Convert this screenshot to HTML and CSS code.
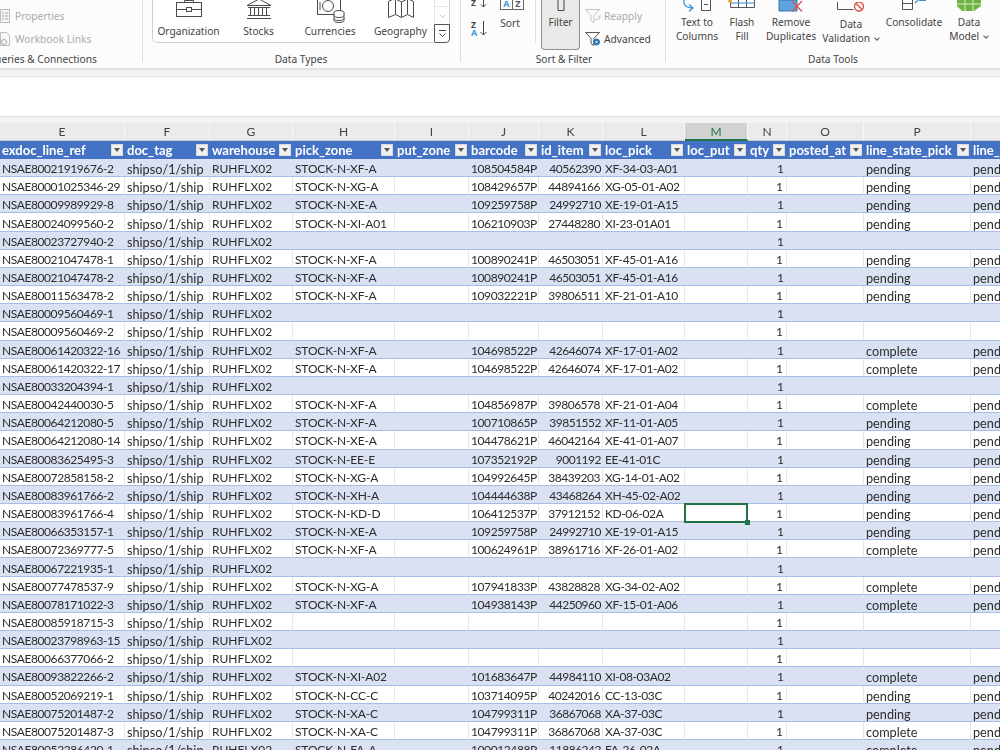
FILE: index.html
```html
<!DOCTYPE html>
<html lang="en">
<head>
<meta charset="utf-8">
<title>Excel data ribbon and sheet</title>
<link rel="stylesheet" href="styles.css">
</head>
<body>
<div class="ribbon">
  <section class="group g-queries">
    <div class="group-body list">
      <div class="list-item muted"><svg class="li-icon" width="10" height="14" viewBox="0 0 10 14"><rect x="0.5" y="0.5" width="9" height="13" fill="#f4f4f4" stroke="#bdbdbd"/><path d="M2 4h2M2 7h2M2 10h2M5 4h3M5 7h3M5 10h3" stroke="#a9a9a9"/></svg><span>Properties</span></div>
      <div class="list-item muted"><svg class="li-icon" width="10" height="14" viewBox="0 0 10 14"><path d="M0.5 0.5h6l3 3v10h-9z" fill="#f8f8f8" stroke="#bdbdbd"/><circle cx="4" cy="10" r="2.5" fill="none" stroke="#a9a9a9"/></svg><span>Workbook Links</span></div>
    </div>
    <div class="group-label label-queries">Queries &amp; Connections</div>
  </section>

  <section class="group g-types">
    <div class="group-body">
      <div class="gallery">
        <div class="g-item">
          <svg width="30" height="21" viewBox="0 0 30 21" fill="none" stroke="#4a4a4a"><path d="M10.500 2V0.500h9V2"/><rect x="2.500" y="2.500" width="25" height="14"/><path d="M2.500 9.500h10M17.500 9.500h10"/><rect x="12.500" y="7.500" width="5" height="4"/></svg>
          <span>Organization</span>
        </div>
        <div class="g-item">
          <svg width="30" height="21" viewBox="0 0 30 21" fill="none" stroke="#4a4a4a"><path d="M3 5.500 15 -1 27 5.500H3z"/><path d="M6.500 7v9M10.500 7v9M14.500 7v9M18.500 7v9M22.500 7v9"/><path d="M4 7.500h22M4 15.500h22M3 18.500h24"/></svg>
          <span>Stocks</span>
        </div>
        <div class="g-item">
          <svg width="30" height="23" viewBox="0 0 30 23" fill="none" stroke="#4a4a4a"><rect x="2.500" y="-2.500" width="23" height="17"/><circle cx="13" cy="6" r="5.500"/><path d="M5 2v8"/><ellipse cx="24" cy="12.500" rx="5" ry="2" fill="#fff"/><path d="M19 12.500v8c0 1.300 2.200 2 5 2s5-.7 5-2v-8M19 15.500c0 1.300 2.200 2 5 2s5-.7 5-2M19 18.500c0 1.300 2.200 2 5 2s5-.7 5-2" fill="#fff"/></svg>
          <span>Currencies</span>
        </div>
        <div class="g-item">
          <svg width="30" height="21" viewBox="0 0 30 21" fill="none" stroke="#4a4a4a"><path d="M7.500 -1 2.500 1.500v16l7-3 6 3 6-3 6 3V1.500l-6-3"/><path d="M9.500 -1v15.500M15.500 2v15.500M21.500 -1v15.500M9.500 -1l6 3 6-3"/></svg>
          <span>Geography</span>
        </div>
        <div class="scroller">
          <div class="sc-btn sc-up"></div>
          <div class="sc-btn sc-mid"><svg width="9" height="6" viewBox="0 0 9 6" fill="none" stroke="#c4c4c4"><path d="M1.500 1.500 4.500 4.500 7.500 1.500"/></svg></div>
          <div class="sc-btn sc-more"><svg width="9" height="8" viewBox="0 0 9 8" fill="none" stroke="#444"><path d="M1 .5h7M1.500 3.500 4.500 6.500 7.500 3.500"/></svg></div>
        </div>
      </div>
    </div>
    <div class="group-label label-types">Data Types</div>
  </section>

  <section class="group g-sort">
    <div class="group-body sort-body">
      <div class="sort-small">
        <svg width="18" height="10" viewBox="0 0 18 10" class="az"><text x="0" y="6" class="az-dark">Z</text><path d="M12.500 0v7M10 4.500l2.500 2.500L15 4.500" fill="none" stroke="#444"/></svg>
        <svg width="18" height="18" viewBox="0 0 18 18" class="az"><text x="0" y="8" class="az-dark">Z</text><text x="0" y="16" class="az-blue">A</text><path d="M12.500 1v14M9.500 12l3 3 3-3" fill="none" stroke="#444"/></svg>
      </div>
      <div class="sort-big">
        <div class="sort-box"><span class="sb-a">A</span><span class="sb-z">Z</span></div>
        <span>Sort</span>
      </div>
      <div class="v-sep"></div>
      <div class="filter-btn">
        <svg width="8" height="11" viewBox="0 0 8 11" fill="none" stroke="#444"><path d="M1 0v10.500h6V0"/></svg>
        <span>Filter</span>
      </div>
      <div class="list sort-list">
        <div class="list-item muted"><svg width="16" height="16" viewBox="0 0 16 16" fill="none" stroke="#c2c2c2"><path d="M.5 1.500h14L9 7.500v7l-3-2v-5z"/><path d="M10 11a3 3 0 0 0 5-2M15 6.500V9h-2.500"/></svg><span>Reapply</span></div>
        <div class="list-item"><svg width="16" height="16" viewBox="0 0 16 16" fill="none" stroke="#555"><path d="M.5 1.500h14L9 7.500v7l-3-2v-5z"/><circle cx="11.500" cy="11" r="3" fill="#2e75b6" stroke="#2e75b6"/><circle cx="11.500" cy="11" r="1" fill="#fff" stroke="none"/></svg><span>Advanced</span></div>
      </div>
    </div>
    <div class="group-label label-sort">Sort &amp; Filter</div>
  </section>

  <section class="group g-tools">
    <div class="group-body tools">
      <div class="tool t-text">
        <svg width="32" height="15" viewBox="0 0 32 15" fill="none"><path d="M4 -2c-3 5 0 10 8 10" stroke="#3b8ed0" stroke-width="1.200"/><path d="M8 4.500l4 3.500-4 3.500" stroke="#3b8ed0" stroke-width="1.200"/><rect x="20.500" y="-2.500" width="9" height="13" stroke="#555"/><path d="M23 4.500h4" stroke="#555"/></svg>
        <span>Text to</span><span>Columns</span>
      </div>
      <div class="tool t-flash">
        <svg width="28" height="15" viewBox="0 0 28 15" fill="none"><path d="M2.500 -1v8.500h24V-1M10.500 -1v8.500M18.500 -1v8.500" stroke="#555"/><path d="M2.500 3h24" stroke="#3b8ed0"/><circle cx="2" cy="1" r="1.800" fill="#ed9a2d"/></svg>
        <span>Flash</span><span>Fill</span>
      </div>
      <div class="tool t-remove">
        <svg width="26" height="15" viewBox="0 0 26 15" fill="none"><path d="M1 0h18v11H1z" fill="#5ea3dd" stroke="#3b78b0"/><path d="M14 1 24 11.500M24 1 14 11.500" stroke="#e0524a" stroke-width="1.300"/></svg>
        <span>Remove</span><span>Duplicates</span>
      </div>
      <div class="tool t-valid">
        <svg width="28" height="15" viewBox="0 0 28 15" fill="none"><path d="M.5 -1v8.500h16M.5 -1h16" stroke="#555"/><circle cx="22" cy="4.500" r="4.500" stroke="#e0524a" stroke-width="1.400"/><path d="M19 1.500l6 6" stroke="#e0524a" stroke-width="1.400"/></svg>
        <span>Data</span><span>Validation <i class="chev"></i></span>
      </div>
      <div class="tool t-cons">
        <svg width="30" height="15" viewBox="0 0 30 15" fill="none"><path d="M3.500 -1v10.500h10V-1M3.500 3.500h10" stroke="#555"/><path d="M16 3l3-3M20 .5h7" stroke="#3b8ed0" stroke-width="1.200"/></svg>
        <span>Consolidate</span>
      </div>
      <div class="tool t-model">
        <svg width="28" height="15" viewBox="0 0 28 15"><path d="M2 -1h24v7l-7 5H7l-5-5z" fill="#6eb33f"/><path d="M10 -1v12M18 -1v12M2 4h24" stroke="#d8eec8" fill="none"/></svg>
        <span>Data</span><span>Model <i class="chev"></i></span>
      </div>
    </div>
    <div class="group-label label-tools">Data Tools</div>
  </section>
</div>

<div class="ribbon-shade"></div>
<div class="formula-gap"></div>

<div class="sheet">
  <div class="col-strip"></div>
  <table class="grid">
    <colgroup>
      <col class="c-e"><col class="c-f"><col class="c-g"><col class="c-h"><col class="c-i"><col class="c-j"><col class="c-k"><col class="c-l"><col class="c-m"><col class="c-n"><col class="c-o"><col class="c-p"><col class="c-q">
    </colgroup>
    <thead>
      <tr class="letters"><th>E</th><th>F</th><th>G</th><th>H</th><th>I</th><th>J</th><th>K</th><th>L</th><th class="active">M</th><th>N</th><th>O</th><th>P</th><th></th></tr>
      <tr class="heads">
        <th><div class="hd"><span>exdoc_line_ref</span><i class="fb"></i></div></th>
        <th><div class="hd"><span>doc_tag</span><i class="fb"></i></div></th>
        <th><div class="hd"><span>warehouse</span><i class="fb"></i></div></th>
        <th><div class="hd"><span>pick_zone</span><i class="fb"></i></div></th>
        <th><div class="hd"><span>put_zone</span><i class="fb"></i></div></th>
        <th><div class="hd"><span>barcode</span><i class="fb"></i></div></th>
        <th><div class="hd"><span>id_item</span><i class="fb"></i></div></th>
        <th><div class="hd"><span>loc_pick</span><i class="fb"></i></div></th>
        <th><div class="hd"><span>loc_put</span><i class="fb"></i></div></th>
        <th><div class="hd"><span>qty</span><i class="fb"></i></div></th>
        <th><div class="hd"><span>posted_at</span><i class="fb"></i></div></th>
        <th><div class="hd"><span>line_state_pick</span><i class="fb"></i></div></th>
        <th><div class="hd"><span>line_state_put</span><i class="fb"></i></div></th>
      </tr>
    </thead>
    <tbody>
      <tr><td>NSAE80021919676-2</td><td>shipso/1/ship</td><td>RUHFLX02</td><td>STOCK-N-XF-A</td><td></td><td>108504584P</td><td class="r">40562390</td><td>XF-34-03-A01</td><td></td><td class="r">1</td><td></td><td>pending</td><td>pending</td></tr>
      <tr><td>NSAE80001025346-29</td><td>shipso/1/ship</td><td>RUHFLX02</td><td>STOCK-N-XG-A</td><td></td><td>108429657P</td><td class="r">44894166</td><td>XG-05-01-A02</td><td></td><td class="r">1</td><td></td><td>pending</td><td>pending</td></tr>
      <tr><td>NSAE80009989929-8</td><td>shipso/1/ship</td><td>RUHFLX02</td><td>STOCK-N-XE-A</td><td></td><td>109259758P</td><td class="r">24992710</td><td>XE-19-01-A15</td><td></td><td class="r">1</td><td></td><td>pending</td><td>pending</td></tr>
      <tr><td>NSAE80024099560-2</td><td>shipso/1/ship</td><td>RUHFLX02</td><td>STOCK-N-XI-A01</td><td></td><td>106210903P</td><td class="r">27448280</td><td>XI-23-01A01</td><td></td><td class="r">1</td><td></td><td>pending</td><td>pending</td></tr>
      <tr><td>NSAE80023727940-2</td><td>shipso/1/ship</td><td>RUHFLX02</td><td></td><td></td><td></td><td></td><td></td><td></td><td class="r">1</td><td></td><td></td><td></td></tr>
      <tr><td>NSAE80021047478-1</td><td>shipso/1/ship</td><td>RUHFLX02</td><td>STOCK-N-XF-A</td><td></td><td>100890241P</td><td class="r">46503051</td><td>XF-45-01-A16</td><td></td><td class="r">1</td><td></td><td>pending</td><td>pending</td></tr>
      <tr><td>NSAE80021047478-2</td><td>shipso/1/ship</td><td>RUHFLX02</td><td>STOCK-N-XF-A</td><td></td><td>100890241P</td><td class="r">46503051</td><td>XF-45-01-A16</td><td></td><td class="r">1</td><td></td><td>pending</td><td>pending</td></tr>
      <tr><td>NSAE80011563478-2</td><td>shipso/1/ship</td><td>RUHFLX02</td><td>STOCK-N-XF-A</td><td></td><td>109032221P</td><td class="r">39806511</td><td>XF-21-01-A10</td><td></td><td class="r">1</td><td></td><td>pending</td><td>pending</td></tr>
      <tr><td>NSAE80009560469-1</td><td>shipso/1/ship</td><td>RUHFLX02</td><td></td><td></td><td></td><td></td><td></td><td></td><td class="r">1</td><td></td><td></td><td></td></tr>
      <tr><td>NSAE80009560469-2</td><td>shipso/1/ship</td><td>RUHFLX02</td><td></td><td></td><td></td><td></td><td></td><td></td><td class="r">1</td><td></td><td></td><td></td></tr>
      <tr><td>NSAE80061420322-16</td><td>shipso/1/ship</td><td>RUHFLX02</td><td>STOCK-N-XF-A</td><td></td><td>104698522P</td><td class="r">42646074</td><td>XF-17-01-A02</td><td></td><td class="r">1</td><td></td><td>complete</td><td>pending</td></tr>
      <tr><td>NSAE80061420322-17</td><td>shipso/1/ship</td><td>RUHFLX02</td><td>STOCK-N-XF-A</td><td></td><td>104698522P</td><td class="r">42646074</td><td>XF-17-01-A02</td><td></td><td class="r">1</td><td></td><td>complete</td><td>pending</td></tr>
      <tr><td>NSAE80033204394-1</td><td>shipso/1/ship</td><td>RUHFLX02</td><td></td><td></td><td></td><td></td><td></td><td></td><td class="r">1</td><td></td><td></td><td></td></tr>
      <tr><td>NSAE80042440030-5</td><td>shipso/1/ship</td><td>RUHFLX02</td><td>STOCK-N-XF-A</td><td></td><td>104856987P</td><td class="r">39806578</td><td>XF-21-01-A04</td><td></td><td class="r">1</td><td></td><td>complete</td><td>pending</td></tr>
      <tr><td>NSAE80064212080-5</td><td>shipso/1/ship</td><td>RUHFLX02</td><td>STOCK-N-XF-A</td><td></td><td>100710865P</td><td class="r">39851552</td><td>XF-11-01-A05</td><td></td><td class="r">1</td><td></td><td>pending</td><td>pending</td></tr>
      <tr><td>NSAE80064212080-14</td><td>shipso/1/ship</td><td>RUHFLX02</td><td>STOCK-N-XE-A</td><td></td><td>104478621P</td><td class="r">46042164</td><td>XE-41-01-A07</td><td></td><td class="r">1</td><td></td><td>pending</td><td>pending</td></tr>
      <tr><td>NSAE80083625495-3</td><td>shipso/1/ship</td><td>RUHFLX02</td><td>STOCK-N-EE-E</td><td></td><td>107352192P</td><td class="r">9001192</td><td>EE-41-01C</td><td></td><td class="r">1</td><td></td><td>pending</td><td>pending</td></tr>
      <tr><td>NSAE80072858158-2</td><td>shipso/1/ship</td><td>RUHFLX02</td><td>STOCK-N-XG-A</td><td></td><td>104992645P</td><td class="r">38439203</td><td>XG-14-01-A02</td><td></td><td class="r">1</td><td></td><td>pending</td><td>pending</td></tr>
      <tr><td>NSAE80083961766-2</td><td>shipso/1/ship</td><td>RUHFLX02</td><td>STOCK-N-XH-A</td><td></td><td>104444638P</td><td class="r">43468264</td><td>XH-45-02-A02</td><td></td><td class="r">1</td><td></td><td>pending</td><td>pending</td></tr>
      <tr><td>NSAE80083961766-4</td><td>shipso/1/ship</td><td>RUHFLX02</td><td>STOCK-N-KD-D</td><td></td><td>106412537P</td><td class="r">37912152</td><td>KD-06-02A</td><td class="selected"><div class="sel-box"><i class="handle"></i></div></td><td class="r">1</td><td></td><td>pending</td><td>pending</td></tr>
      <tr><td>NSAE80066353157-1</td><td>shipso/1/ship</td><td>RUHFLX02</td><td>STOCK-N-XE-A</td><td></td><td>109259758P</td><td class="r">24992710</td><td>XE-19-01-A15</td><td></td><td class="r">1</td><td></td><td>pending</td><td>pending</td></tr>
      <tr><td>NSAE80072369777-5</td><td>shipso/1/ship</td><td>RUHFLX02</td><td>STOCK-N-XF-A</td><td></td><td>100624961P</td><td class="r">38961716</td><td>XF-26-01-A02</td><td></td><td class="r">1</td><td></td><td>complete</td><td>pending</td></tr>
      <tr><td>NSAE80067221935-1</td><td>shipso/1/ship</td><td>RUHFLX02</td><td></td><td></td><td></td><td></td><td></td><td></td><td class="r">1</td><td></td><td></td><td></td></tr>
      <tr><td>NSAE80077478537-9</td><td>shipso/1/ship</td><td>RUHFLX02</td><td>STOCK-N-XG-A</td><td></td><td>107941833P</td><td class="r">43828828</td><td>XG-34-02-A02</td><td></td><td class="r">1</td><td></td><td>complete</td><td>pending</td></tr>
      <tr><td>NSAE80078171022-3</td><td>shipso/1/ship</td><td>RUHFLX02</td><td>STOCK-N-XF-A</td><td></td><td>104938143P</td><td class="r">44250960</td><td>XF-15-01-A06</td><td></td><td class="r">1</td><td></td><td>complete</td><td>pending</td></tr>
      <tr><td>NSAE80085918715-3</td><td>shipso/1/ship</td><td>RUHFLX02</td><td></td><td></td><td></td><td></td><td></td><td></td><td class="r">1</td><td></td><td></td><td></td></tr>
      <tr><td>NSAE80023798963-15</td><td>shipso/1/ship</td><td>RUHFLX02</td><td></td><td></td><td></td><td></td><td></td><td></td><td class="r">1</td><td></td><td></td><td></td></tr>
      <tr><td>NSAE80066377066-2</td><td>shipso/1/ship</td><td>RUHFLX02</td><td></td><td></td><td></td><td></td><td></td><td></td><td class="r">1</td><td></td><td></td><td></td></tr>
      <tr><td>NSAE80093822266-2</td><td>shipso/1/ship</td><td>RUHFLX02</td><td>STOCK-N-XI-A02</td><td></td><td>101683647P</td><td class="r">44984110</td><td>XI-08-03A02</td><td></td><td class="r">1</td><td></td><td>complete</td><td>pending</td></tr>
      <tr><td>NSAE80052069219-1</td><td>shipso/1/ship</td><td>RUHFLX02</td><td>STOCK-N-CC-C</td><td></td><td>103714095P</td><td class="r">40242016</td><td>CC-13-03C</td><td></td><td class="r">1</td><td></td><td>pending</td><td>pending</td></tr>
      <tr><td>NSAE80075201487-2</td><td>shipso/1/ship</td><td>RUHFLX02</td><td>STOCK-N-XA-C</td><td></td><td>104799311P</td><td class="r">36867068</td><td>XA-37-03C</td><td></td><td class="r">1</td><td></td><td>pending</td><td>pending</td></tr>
      <tr><td>NSAE80075201487-3</td><td>shipso/1/ship</td><td>RUHFLX02</td><td>STOCK-N-XA-C</td><td></td><td>104799311P</td><td class="r">36867068</td><td>XA-37-03C</td><td></td><td class="r">1</td><td></td><td>complete</td><td>pending</td></tr>
      <tr><td>NSAE80052286420-1</td><td>shipso/1/ship</td><td>RUHFLX02</td><td>STOCK-N-FA-A</td><td></td><td>100012488P</td><td class="r">11886242</td><td>FA-26-02A</td><td></td><td class="r">1</td><td></td><td>complete</td><td>pending</td></tr>
    </tbody>
  </table>
</div>
</body>
</html>
```

FILE: styles.css
```css
* { box-sizing: border-box; }
html, body { margin: 0; height: 100%; }
body {
  width: 1000px;
  height: 750px;
  overflow: hidden;
  background: #fff;
  display: flex;
  flex-direction: column;
  font-family: "Noto Sans", sans-serif;
  color: #444;
  filter: blur(0.35px);
}

/* Ribbon */
.ribbon {
  flex: none;
  height: 68px;
  display: flex;
  overflow: hidden;
  background: #fcfcfc;
  font-size: 10.200px;
  line-height: 14px;
}
.group {
  flex: none;
  height: 62px;
  display: flex;
  flex-direction: column;
  border-right: 1px solid #dedede;
}
.group-body { height: 52px; flex: none; }
.group-label { text-align: center; line-height: 14px; white-space: nowrap; }
.g-queries { width: 143px; }
.g-types { width: 318px; padding-left: 9px; }
.g-sort { width: 205px; }
.g-tools { flex: 1; border-right: 0; }
.label-queries { width: 110px; margin-left: -13px; }
.label-types { width: 298px; }
.label-sort { width: 100px; margin-left: 53px; }

.list { display: flex; flex-direction: column; gap: 9px; padding-top: 9px; }
.list-item { display: flex; align-items: center; gap: 5px; height: 14px; white-space: nowrap; }
.muted { color: #ababab; }

.gallery {
  width: 298px;
  height: 43px;
  display: grid;
  grid-template-columns: 71px 69px 74px 67px 15px;
  border: 1px solid #cfcfcf;
  border-top: 0;
  border-radius: 0 0 5px 5px;
  background: #fff;
}
.g-item { display: flex; flex-direction: column; align-items: center; height: 42px; }
.g-item svg { flex: none; height: 23px; }
.g-item span { line-height: 14px; margin-top: 1px; }
.g-item:nth-child(-n+2) svg, .g-item:nth-child(4) svg { height: 21px; margin-bottom: 2px; }
.scroller { display: flex; flex-direction: column; align-items: stretch; }
.sc-btn { display: flex; align-items: center; justify-content: center; border-left: 1px solid #e6e6e6; }
.sc-up { height: 7px; border-bottom: 1px solid #e6e6e6; }
.sc-mid { height: 17px; }
.sc-more { flex: 1; border: 1px solid #555; border-radius: 0 0 4px 2px; margin: 0 -1px -1px 0; background: #fff; }

.sort-body { display: flex; }
.sort-small { width: 37px; padding: 0 0 0 10px; display: flex; flex-direction: column; gap: 10px; }
.az { display: block; }
.az-dark { font: 700 8.500px "Noto Sans", sans-serif; fill: #444; }
.az-blue { font: 700 9px "Noto Sans", sans-serif; fill: #3b9ad8; }
.sort-big { width: 26px; display: flex; flex-direction: column; align-items: center; }
.sort-big > span { margin-right: 2px; line-height: 16px; }
.sort-box { width: 24px; height: 10px; margin: 0 0 5px 2px; display: flex; border: 1px solid #666; border-top: 0; font-size: 9px; line-height: 8px; font-weight: 700; flex: none; }
.sb-a { flex: 1; text-align: center; color: #3b9ad8; border-right: 1px solid #666; }
.sb-z { flex: 1; text-align: center; color: #555; }
.v-sep { width: 1px; height: 43px; background: #dedede; margin: 0 5px 0 11px; flex: none; }
.filter-btn {
  width: 39px;
  height: 50px;
  flex: none;
  display: flex;
  flex-direction: column;
  align-items: center;
  gap: 4px;
  background: #e9e9e9;
  border: 1px solid #8f8f8f;
  border-top: 0;
  border-radius: 0 0 4px 4px;
}
.sort-list { padding: 8px 0 0 5px; gap: 7px; }
.sort-list .list-item { height: 16px; gap: 3px; }

.tools { display: flex; }
.tool { display: flex; flex-direction: column; align-items: center; flex: none; white-space: nowrap; }
.tool svg { flex: none; height: 15px; }
.t-text { width: 62px; }
.t-flash { width: 28px; }
.t-remove { width: 70px; }
.t-valid { width: 50px; padding-top: 2px; }
.t-cons { width: 76px; }
.t-model { width: 34px; }
.chev { display: inline-block; width: 4px; height: 4px; margin: 0 1px 2px 2px; border-right: 1px solid #555; border-bottom: 1px solid #555; transform: rotate(45deg); }

/* Band under the ribbon and blank formula area */
.ribbon-shade { flex: none; height: 9px; background: linear-gradient(#d9d9d9, #f2f2f2 35%, #f5f5f5); border-bottom: 1px solid #e2e2e2; }
.formula-gap { flex: none; height: 39px; background: #fff; }

/* Sheet */
.sheet { flex: 1; overflow: hidden; min-height: 0; }
.col-strip { height: 7px; background: #f3f3f3; border-top: 1px solid #dfdfdf; }
.grid {
  table-layout: fixed;
  width: 1071px;
  border-collapse: separate;
  border-spacing: 0;
  font-family: Lato, sans-serif;
  font-size: 12px;
  color: #2c2c2c;
}
.c-e { width: 125px; } .c-f { width: 85px; } .c-g { width: 83px; } .c-h { width: 102px; }
.c-i { width: 74px; } .c-j { width: 70px; } .c-k { width: 64px; } .c-l { width: 82px; }
.c-m { width: 63px; } .c-n { width: 39px; } .c-o { width: 77px; } .c-p { width: 107px; } .c-q { width: 100px; }

.letters th {
  height: 18px;
  padding: 0;
  font-weight: 400;
  background: #ebebeb;
  border-right: 1px solid #f8f8f8;
  font-size: 12px;
  color: #444;
  border-bottom: 1px solid #c9c9c9;
}
.letters .active { background: #d2d2d2; color: #217346; border-bottom: 2px solid #217346; }
.heads th { height: 18px; padding: 0; background: #4472c4; color: #fff; font-weight: 700; font-size: 13px; }
.hd { display: flex; align-items: center; justify-content: space-between; height: 18px; padding: 0 2px; overflow: hidden; white-space: nowrap; }
.fb { flex: none; width: 12px; height: 12px; position: relative; background: #f0f0f0; border: 1px solid #d9d9d9; }
.fb::after { content: ""; position: absolute; left: 2px; top: 3px; border: 3px solid transparent; border-top: 4px solid #555; border-bottom: 0; }

.grid td {
  height: 18.160px;
  padding: 3px 2px 0;
  line-height: 14px;
  white-space: nowrap;
  overflow: hidden;
  border-bottom: 1px solid #a8bde6;
}
.grid tbody tr:nth-child(odd) td { background: #d9e1f2; }
.grid tbody tr:nth-child(even) td { background: #fff; border-right: 1px solid #e6e6e6; }
.grid td:nth-child(1) { letter-spacing: -0.41px; }
.grid td:nth-child(2), .grid td:nth-child(12), .grid td:nth-child(13) { font-size: 12.700px; }
.grid td:nth-child(4) { letter-spacing: -0.15px; }
.grid td:nth-child(6) { letter-spacing: -0.4px; }
.grid td:nth-child(7) { letter-spacing: -0.5px; }
.grid td:nth-child(8) { letter-spacing: -0.4px; }
.grid .r { text-align: right; padding-right: 2px; }
.grid .r:nth-child(10) { padding-right: 3px; }
.grid td.selected { position: relative; overflow: visible; padding: 0; }
.sel-box { position: absolute; left: -1px; right: -1px; top: -1px; bottom: -2px; border: 2px solid #217346; }
.handle { position: absolute; right: -4px; bottom: -4px; width: 5px; height: 5px; background: #217346; }
```
